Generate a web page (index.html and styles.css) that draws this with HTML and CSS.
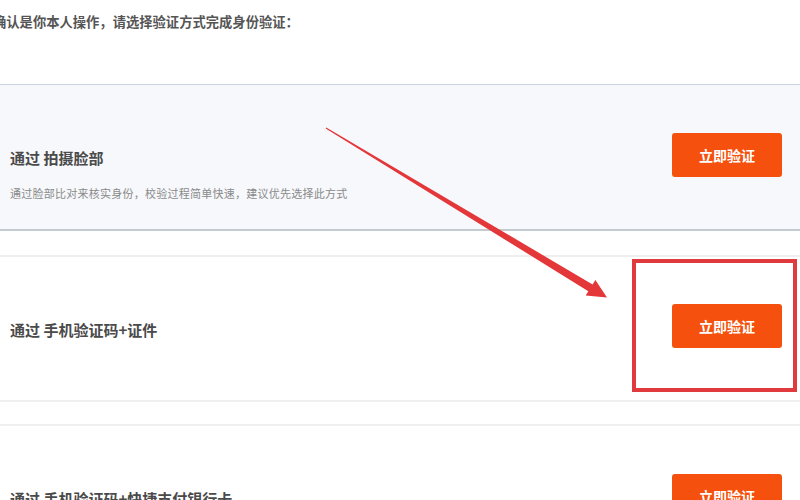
FILE: index.html
```html
<!DOCTYPE html>
<html lang="zh-CN">
<head>
    <meta charset="UTF-8">
    <meta name="viewport" content="width=device-width, initial-scale=1.0">
    <title>身份验证</title>
    <link rel="stylesheet" href="styles.css">
</head>
<body>
    <div class="verify-page">
        <p class="verify-intro">确认是你本人操作，请选择验证方式完成身份验证：</p>

        <div class="option option-face">
            <div class="option-info">
                <h3 class="option-title">通过 拍摄脸部</h3>
                <p class="option-desc">通过脸部比对来核实身份，校验过程简单快速，建议优先选择此方式</p>
            </div>
            <a href="#" class="btn-verify">立即验证</a>
        </div>

        <div class="option option-marked">
            <div class="option-info">
                <h3 class="option-title">通过 手机验证码+证件</h3>
            </div>
            <a href="#" class="btn-verify">立即验证</a>
            <div class="mark-box"></div>
        </div>

        <div class="option">
            <div class="option-info">
                <h3 class="option-title">通过 手机验证码+快捷支付银行卡</h3>
            </div>
            <a href="#" class="btn-verify">立即验证</a>
        </div>

        <!-- 标注箭头 -->
        <svg class="mark-arrow" width="800" height="500" viewBox="0 0 800 500">
            <polygon points="326.3,127.4 592.6,284.5 595.4,279.9 607,297.5 585.7,295.6 588.3,291.2 325.7,128.6" fill="#e3373a"/>
        </svg>
    </div>
</body>
</html>
```

FILE: styles.css
```css
* {
    margin: 0;
    padding: 0;
    box-sizing: border-box;
}

body {
    font-family: "Noto Sans CJK SC", "Noto Sans", sans-serif;
    background: #ffffff;
    width: 800px;
    height: 500px;
    overflow: hidden;
}

.verify-page {
    position: relative;
    height: 500px;
}

.verify-intro {
    height: 84px;
    padding-top: 12px;
    margin-left: -7px;
    font-size: 13.3px;
    line-height: 20px;
    font-weight: 700;
    color: #555555;
}

.option {
    position: relative;
    display: flex;
    align-items: flex-start;
    justify-content: space-between;
    height: 147px;
    padding: 0 18px 0 10px;
    border-top: 2px solid #efefef;
    border-bottom: 2px solid #efefef;
    margin-bottom: 22px;
    background: #ffffff;
}

.option-face {
    border-top: 1px solid #c8d5e2;
    border-bottom: 2px solid #c3cbd0;
    background: #f6f8fb;
    margin-bottom: 24px;
}

.option-info {
    padding-top: 63px;
}

.option-title {
    font-size: 15px;
    line-height: 20px;
    font-weight: 700;
    color: #4a4a4a;
}

.option-desc {
    margin-top: 17px;
    font-size: 11px;
    line-height: 16px;
    letter-spacing: 0.25px;
    color: #8a8a8a;
}

.btn-verify {
    display: flex;
    align-items: center;
    justify-content: center;
    width: 110px;
    height: 44px;
    margin-top: 48px;
    background: #f5500d;
    border-radius: 3px;
    color: #ffffff;
    font-size: 14px;
    font-weight: 700;
    text-decoration: none;
}

.option-marked .btn-verify {
    margin-top: 47px;
}

/* 标注框 */
.mark-box {
    position: absolute;
    left: 632px;
    top: 2px;
    width: 165px;
    height: 133px;
    border: 4px solid #e0393e;
}

.mark-arrow {
    position: absolute;
    left: 0;
    top: 0;
    pointer-events: none;
}
```
